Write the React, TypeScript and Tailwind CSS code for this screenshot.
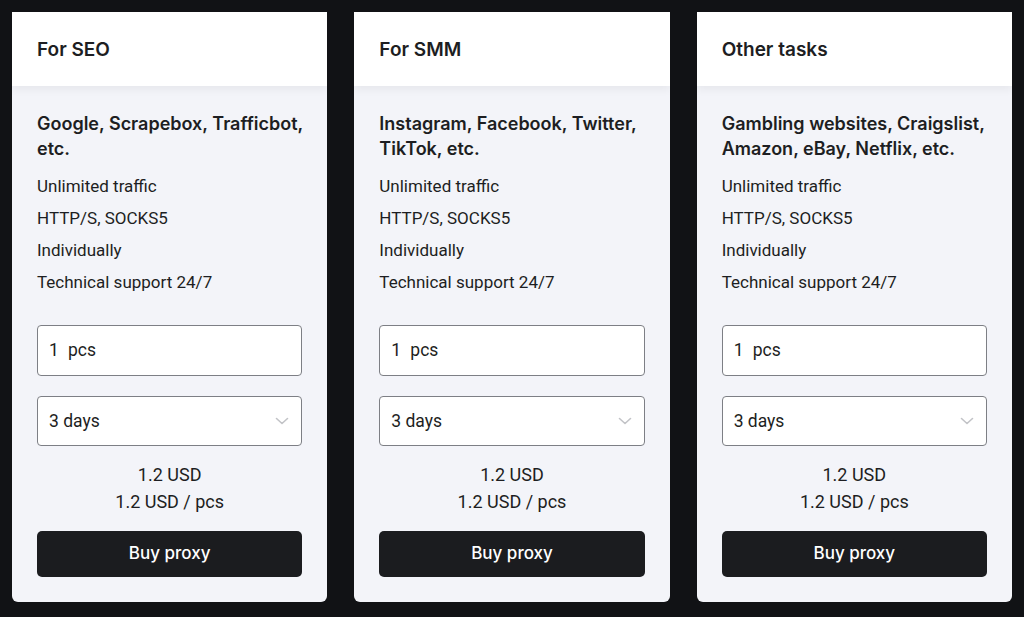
import { useState } from 'react';

interface Plan {
  title: string;
  subtitle: string;
}

const plans: Plan[] = [
  { title: 'For SEO', subtitle: 'Google, Scrapebox, Trafficbot, etc.' },
  { title: 'For SMM', subtitle: 'Instagram, Facebook, Twitter, TikTok, etc.' },
  { title: 'Other tasks', subtitle: 'Gambling websites, Craigslist, Amazon, eBay, Netflix, etc.' },
];

const features = ['Unlimited traffic', 'HTTP/S, SOCKS5', 'Individually', 'Technical support 24/7'];

function PlanCard({ plan }: { plan: Plan }) {
  const [qty, setQty] = useState('1');

  return (
    <div className="flex-1 flex flex-col bg-[#f3f4f9] rounded-b-md overflow-hidden">
      {/* header */}
      <div className="relative z-10 h-[74px] flex items-center px-[25px] pt-[2px] bg-white shadow-[0_4px_8px_rgba(0,0,0,0.05)]">
        <h2 className="text-[19px] font-semibold text-[#1d1e22] font-['Inter',sans-serif]">{plan.title}</h2>
      </div>

      {/* body */}
      <div className="flex flex-col px-[25px] pt-[25px] pb-[25px]">
        <h3 className="-mr-[6px] text-[18px] leading-[25px] font-semibold text-[#1d1e22] font-['Inter',sans-serif]">
          {plan.subtitle}
        </h3>
        <ul className="mt-[9px] text-[17px] leading-8 text-[#1d1e22] font-['Roboto',sans-serif]">
          {features.map((f) => (
            <li key={f}>{f}</li>
          ))}
        </ul>

        <div className="mt-[27px] h-[51px] flex items-center gap-[9px] px-[11px] bg-white border border-[#7d7f85] rounded-[4px] text-[17.5px] text-[#1d1e22] font-['Roboto',sans-serif]">
          <input
            value={qty}
            onChange={(e) => setQty(e.target.value)}
            className="w-[10px] bg-transparent outline-none"
          />
          <span>pcs</span>
        </div>

        <div className="mt-[20px] h-[50px] flex items-center justify-between px-[11px] bg-white border border-[#7d7f85] rounded-[4px] text-[17.5px] text-[#1d1e22] font-['Roboto',sans-serif]">
          <span>3 days</span>
          <svg width="14" height="8" viewBox="0 0 14 8" fill="none" className="mr-[1px]">
            <polyline points="1.5,1.5 7,6.5 12.5,1.5" stroke="#c2c3c7" strokeWidth="1.6" strokeLinecap="round" strokeLinejoin="round" />
          </svg>
        </div>

        <div className="mt-[15px] text-center text-[18px] leading-[27px] text-[#1d1e22] font-['Roboto',sans-serif]">
          <p>1.2 USD</p>
          <p>1.2 USD / pcs</p>
        </div>

        <button className="mt-[16px] h-[46px] w-full rounded-[5px] bg-[#1b1c1f] text-white text-[17px] font-medium font-['Inter',sans-serif]">
          Buy proxy
        </button>
      </div>
    </div>
  );
}

export default function App() {
  return (
    <div className="h-screen bg-[#111215] flex items-start gap-[27px] px-[12px] pt-[12px]">
      {plans.map((p) => (
        <PlanCard key={p.title} plan={p} />
      ))}
    </div>
  );
}
